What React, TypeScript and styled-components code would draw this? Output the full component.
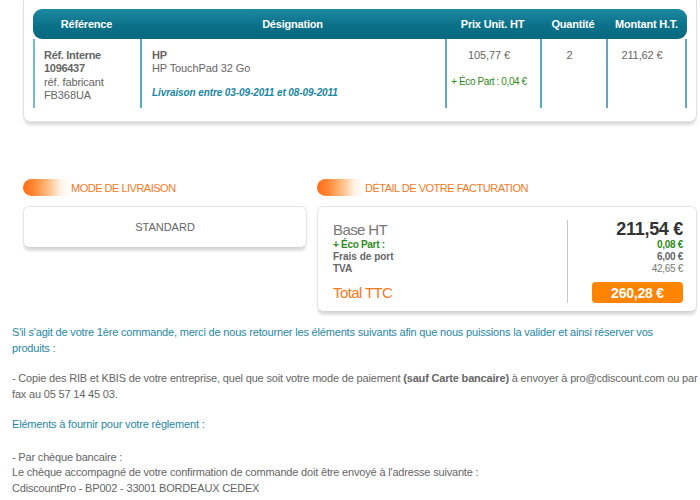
import React from "react";
import styled, { createGlobalStyle } from "styled-components";

const Global = createGlobalStyle`
  html, body { margin: 0; padding: 0; background: #fff; }
  body { font-family: "Liberation Sans", Arial, sans-serif; color: #666; }
  p { margin: 0; }
`;

const Page = styled.div`
  width: 700px;
`;

const OrderCard = styled.div`
  margin: 0 3px 0 23px;
  padding: 9px 9px 13px 9px;
  border: 1px solid #e2e2e2;
  border-top: none;
  border-radius: 0 0 7px 7px;
  background: #fff;
  box-shadow: 0 4px 3px -1px rgba(0, 0, 0, 0.14);
`;

const Grid = styled.div`
  display: grid;
  grid-template-columns: 107px 305px 95px 66px 81px;
`;

const HeadRow = styled.div`
  grid-column: 1 / -1;
  display: grid;
  grid-template-columns: subgrid;
  height: 30px;
  align-items: center;
  border-radius: 9px;
  background: linear-gradient(#1d8aa2, #0b7189 55%, #07697f);
`;

const HeadCell = styled.div`
  color: #fff;
  font-weight: bold;
  font-size: 11px;
  text-align: center;
  letter-spacing: -0.2px;
`;

const Cell = styled.div<{ $align?: string; $first?: boolean; $last?: boolean }>`
  height: 69px;
  box-sizing: border-box;
  padding: 10px 9px 0 ${(p) => (p.$align === "center" ? "0" : p.$first ? "9px" : "10px")};
  text-align: ${(p) => p.$align || "left"};
  border-left: 2px solid ${(p) => (p.$first ? "#74bccb" : "#5ea9bd")};
  ${(p) => (p.$last ? "border-right: 2px solid #5ea9bd;" : "")}
  font-size: 11px;
  line-height: 13.3px;
  color: #666;
  letter-spacing: -0.1px;
`;

const Strong = styled.span`
  font-weight: bold;
  display: block;
  letter-spacing: -0.3px;
`;

const Line = styled.span`
  display: block;
`;

const Delivery = styled.span`
  display: block;
  margin-top: 10px;
  color: #1a86a3;
  font-style: italic;
  font-weight: bold;
  font-size: 10px;
  letter-spacing: -0.1px;
`;

const Eco = styled.span`
  display: block;
  margin-top: 13px;
  color: #2e8a22;
  font-size: 10px;
  letter-spacing: -0.4px;
`;

const Summary = styled.div`
  display: grid;
  grid-template-columns: 284px 380px;
  column-gap: 10px;
  margin: 57px 0 0 23px;
  align-items: start;
`;

const Section = styled.div``;

const SectionTitle = styled.div`
  display: flex;
  align-items: center;
  height: 17px;
  margin-bottom: 10px;
`;

const Pill = styled.span`
  width: 47px;
  height: 17px;
  border-radius: 9px 0 0 9px;
  background: linear-gradient(
    to right,
    #ff6f14 0%,
    #ff8a3a 25%,
    #ffc089 55%,
    rgba(255, 235, 215, 0.6) 80%,
    rgba(255, 255, 255, 0) 100%
  );
`;

const TitleText = styled.span`
  font-size: 11px;
  color: #f47a25;
  letter-spacing: -0.5px;
  margin-left: 1px;
`;

const Box = styled.div`
  border: 1px solid #e4e4e4;
  border-bottom-color: #d4d4d4;
  border-radius: 6px;
  background: #fff;
  box-shadow: 0 4px 3px -1px rgba(0, 0, 0, 0.14);
`;

const Standard = styled.div`
  height: 40px;
  display: flex;
  justify-content: center;
  padding-top: 14px;
  box-sizing: border-box;
  font-size: 11px;
  color: #666;
`;

const Billing = styled.div`
  display: grid;
  grid-template-columns: 234px 116px;
  padding: 13px 13px 8px 15px;
`;

const Label = styled.div<{ $kind?: string }>`
  display: flex;
  align-items: center;
  height: ${(p) => (p.$kind === "big" ? "18px" : "12px")};
  font-size: ${(p) => (p.$kind === "big" || p.$kind === "total" ? "15px" : "10px")};
  font-weight: ${(p) => (p.$kind === "small" || p.$kind === "eco" ? "bold" : "normal")};
  color: ${(p) => (p.$kind === "eco" ? "#2e8a22" : p.$kind === "total" ? "#f47a25" : p.$kind === "big" ? "#777" : "#666")};
  letter-spacing: ${(p) => (p.$kind === "big" || p.$kind === "total" ? "-0.6px" : p.$kind === "eco" ? "-0.3px" : "0")};
`;

const Value = styled.div<{ $kind?: string }>`
  display: flex;
  align-items: center;
  justify-content: flex-end;
  border-left: 1px solid #c8c8c8;
  height: ${(p) => (p.$kind === "big" ? "18px" : "12px")};
  font-size: ${(p) => (p.$kind === "big" ? "18px" : "10px")};
  font-weight: ${(p) => (p.$kind === "plain" ? "normal" : "bold")};
  color: ${(p) => (p.$kind === "eco" ? "#2e8a22" : p.$kind === "big" ? "#333" : p.$kind === "plain" ? "#777" : "#666")};
  letter-spacing: -0.3px;
`;

const TotalLabel = styled(Label)`
  height: 29px;
  padding-top: 8px;
  box-sizing: border-box;
`;

const TotalValue = styled(Value)`
  height: 29px;
  padding-top: 8px;
  box-sizing: border-box;
`;

const TotalButton = styled.div`
  width: 91px;
  height: 21px;
  border-radius: 4px;
  background: #ff8400;
  color: #fff;
  font-weight: bold;
  font-size: 14px;
  display: flex;
  align-items: center;
  justify-content: center;
  letter-spacing: -0.2px;
`;

const Notes = styled.div`
  margin: 13px 0 0 12px;
  width: 686px;
  font-size: 11px;
  line-height: 15.5px;
  letter-spacing: -0.18px;
`;

const Para = styled.p<{ $tone?: "teal" | "gray"; $gap?: number; $narrow?: boolean }>`
  color: ${(p) => (p.$tone === "teal" ? "#1f87a6" : "#666")};
  margin-top: ${(p) => p.$gap ?? 0}px;
  ${(p) => (p.$narrow ? "max-width: 660px;" : "")}
`;

export default function App() {
  return (
    <Page>
      <Global />
      <OrderCard>
        <Grid>
          <HeadRow>
            <HeadCell>Référence</HeadCell>
            <HeadCell>Désignation</HeadCell>
            <HeadCell>Prix Unit. HT</HeadCell>
            <HeadCell>Quantité</HeadCell>
            <HeadCell>Montant H.T.</HeadCell>
          </HeadRow>
          <Cell $first>
            <Strong>Réf. Interne</Strong>
            <Strong>1096437</Strong>
            <Line>réf. fabricant</Line>
            <Line>FB368UA</Line>
          </Cell>
          <Cell>
            <Strong>HP</Strong>
            <Line>HP TouchPad 32 Go</Line>
            <Delivery>Livraison entre 03-09-2011 et 08-09-2011</Delivery>
          </Cell>
          <Cell $align="center">
            <Line>105,77 €</Line>
            <Eco>+ Éco Part : 0,04 €</Eco>
          </Cell>
          <Cell $align="center">
            <Line>2</Line>
          </Cell>
          <Cell $align="center" $last>
            <Line>211,62 €</Line>
          </Cell>
        </Grid>
      </OrderCard>

      <Summary>
        <Section>
          <SectionTitle>
            <Pill />
            <TitleText>MODE DE LIVRAISON</TitleText>
          </SectionTitle>
          <Box>
            <Standard>STANDARD</Standard>
          </Box>
        </Section>
        <Section>
          <SectionTitle>
            <Pill />
            <TitleText>DÉTAIL DE VOTRE FACTURATION</TitleText>
          </SectionTitle>
          <Box>
            <Billing>
              <Label $kind="big">Base HT</Label>
              <Value $kind="big">211,54 €</Value>
              <Label $kind="eco">+ Éco Part :</Label>
              <Value $kind="eco">0,08 €</Value>
              <Label $kind="small">Frais de port</Label>
              <Value $kind="small">6,00 €</Value>
              <Label $kind="small">TVA</Label>
              <Value $kind="plain">42,65 €</Value>
              <TotalLabel $kind="total">Total TTC</TotalLabel>
              <TotalValue>
                <TotalButton>260,28 €</TotalButton>
              </TotalValue>
            </Billing>
          </Box>
        </Section>
      </Summary>

      <Notes>
        <Para $tone="teal" $narrow>
          S'il s'agit de votre 1ère commande, merci de nous retourner les éléments suivants afin que nous puissions la valider et ainsi réserver vos produits :
        </Para>
        <Para $gap={15}>
          - Copie des RIB et KBIS de votre entreprise, quel que soit votre mode de paiement <b>(sauf Carte bancaire)</b> à envoyer à pro@cdiscount.com ou par fax au 05 57 14 45 03.
        </Para>
        <Para $tone="teal" $gap={15}>
          Eléments à fournir pour votre règlement :
        </Para>
        <Para $gap={17}>
          - Par chèque bancaire :
          <br />
          Le chèque accompagné de votre confirmation de commande doit être envoyé à l'adresse suivante :
          <br />
          CdiscountPro - BP002 - 33001 BORDEAUX CEDEX
        </Para>
      </Notes>
    </Page>
  );
}
